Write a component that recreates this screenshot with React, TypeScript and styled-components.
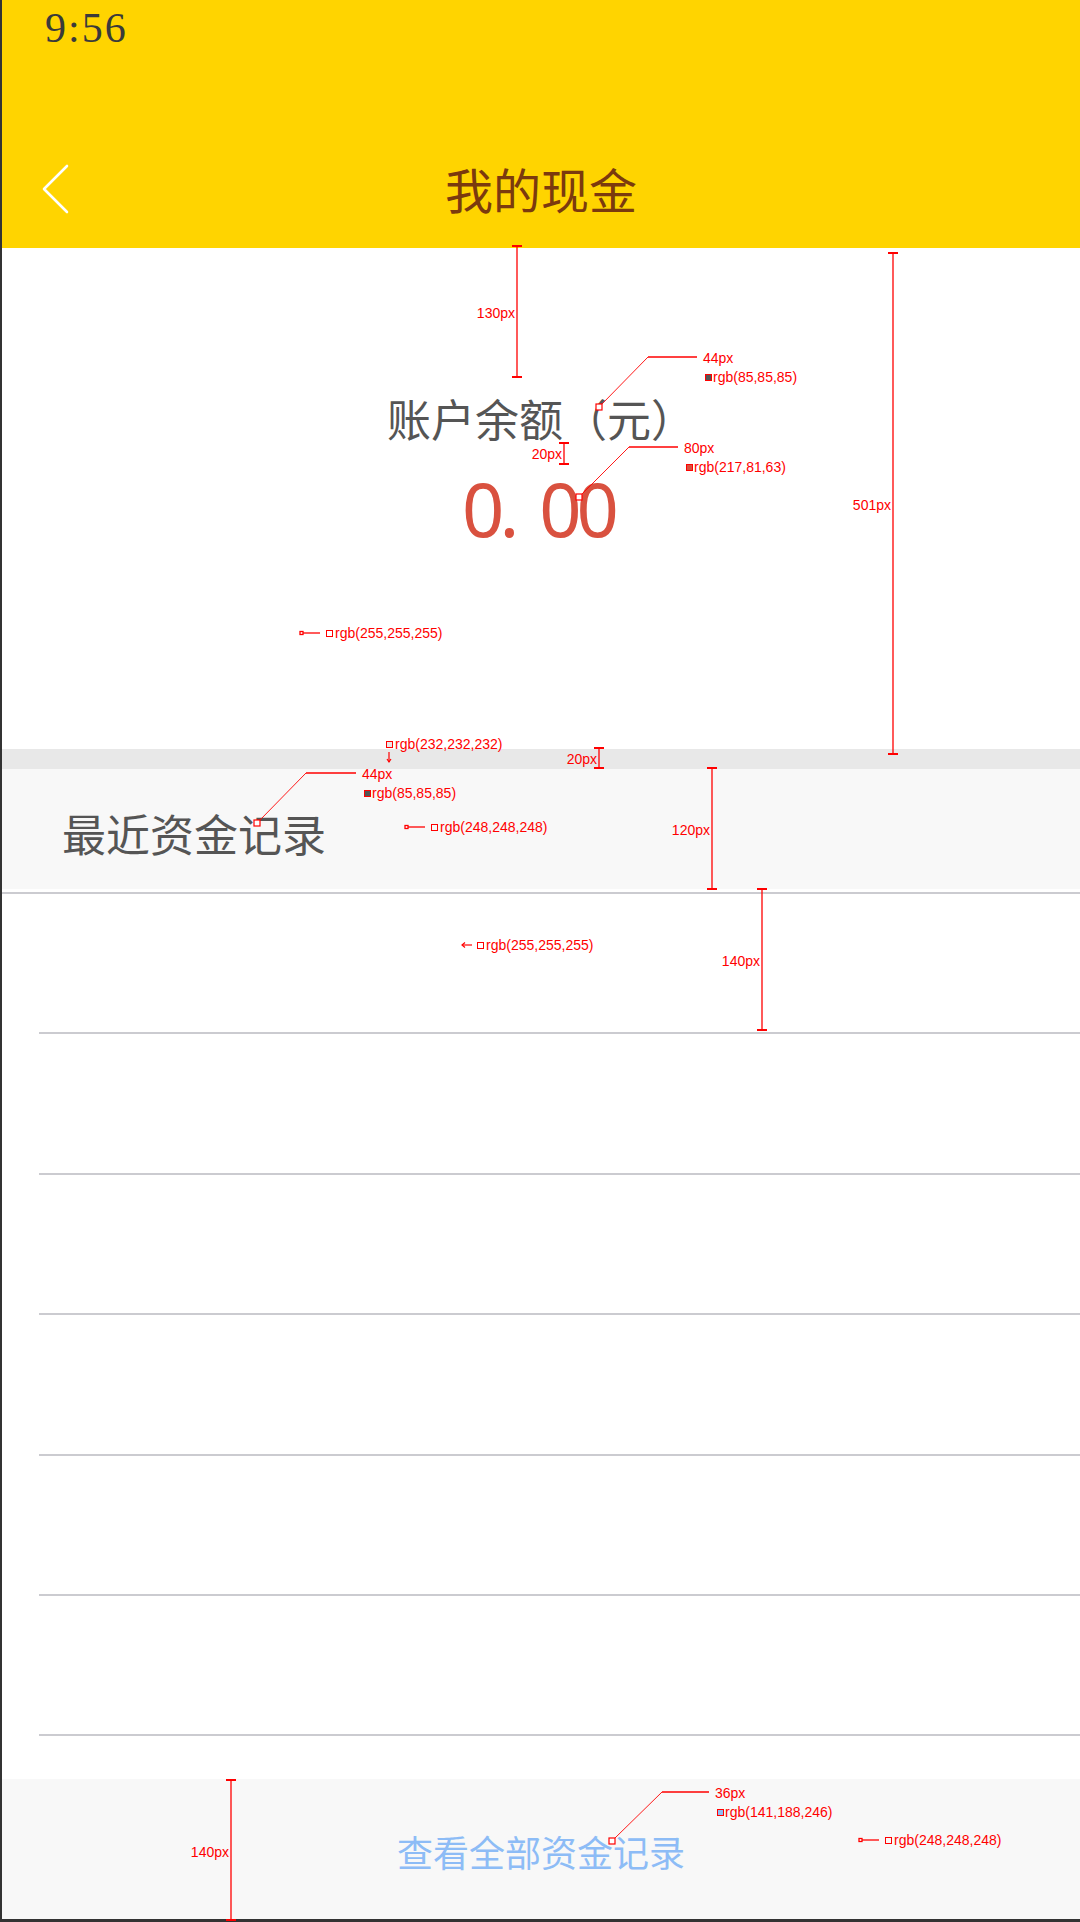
import styled, { createGlobalStyle } from "styled-components";

const GlobalStyle = createGlobalStyle`
  html, body {
    margin: 0;
    padding: 0;
    background: #ffffff;
  }
  body {
    font-family: "Noto Sans CJK SC", "Noto Sans", sans-serif;
  }
`;

const RED = "#ff0000";

// ─── Annotation data (designer mark-up drawn over the page) ─────────
const dims = [
  { x: 517, y1: 246, y2: 377, label: "130px", ly: 313 },
  { x: 564, y1: 443, y2: 464, label: "20px", ly: 454 },
  { x: 893, y1: 253, y2: 754, label: "501px", ly: 505 },
  { x: 599, y1: 748, y2: 768, label: "20px", ly: 759 },
  { x: 712, y1: 768, y2: 889, label: "120px", ly: 830 },
  { x: 762, y1: 889, y2: 1030, label: "140px", ly: 961 },
  { x: 231, y1: 1780, y2: 1920, label: "140px", ly: 1852 },
];

const callouts = [
  { sx: 599, sy: 407, ex: 648, ey: 357, hx: 697, size: "44px", color: "rgb(85,85,85)" },
  { sx: 579, sy: 497, ex: 629, ey: 447, hx: 678, size: "80px", color: "rgb(217,81,63)" },
  { sx: 257, sy: 823, ex: 306, ey: 773, hx: 356, size: "44px", color: "rgb(85,85,85)" },
  { sx: 612, sy: 1841, ex: 662, ey: 1792, hx: 709, size: "36px", color: "rgb(141,188,246)" },
];

const picks = [
  { x: 300, y: 633, color: "rgb(255,255,255)", arrow: false },
  { x: 405, y: 827, color: "rgb(248,248,248)", arrow: false },
  { x: 859, y: 1840, color: "rgb(248,248,248)", arrow: false },
  { x: 462, y: 945, color: "rgb(255,255,255)", arrow: true },
];

const rows = [0, 1, 2, 3, 4, 5];

const App = () => {
  return (
    <Page>
      <GlobalStyle />
      <Header>
        <StatusBar>9:56</StatusBar>
        <NavBar>
          <BackBtn aria-label="back">
            <svg width="30" height="50" viewBox="0 0 30 50">
              <polyline
                points="26,2 3,25 26,48"
                fill="none"
                stroke="#ffffff"
                strokeWidth="2.6"
                strokeLinecap="round"
                strokeLinejoin="round"
              />
            </svg>
          </BackBtn>
          <NavTitle>我的现金</NavTitle>
          <span />
        </NavBar>
      </Header>

      <BalanceCard>
        <BalanceLabel>账户余额（元）</BalanceLabel>
        <Amount>
          0<Dot>.</Dot>00
        </Amount>
      </BalanceCard>

      <Gap />

      <SectionHead>
        <SectionTitle>最近资金记录</SectionTitle>
      </SectionHead>

      <List>
        {rows.map((r) => (
          <Row key={r} />
        ))}
      </List>

      <Footer>
        <FooterLink>查看全部资金记录</FooterLink>
      </Footer>

      <Overlay>
        <AnnSvg width="1080" height="1922" viewBox="0 0 1080 1922">
          {dims.map((d, i) => (
            <g key={`d${i}`} stroke={RED} strokeWidth="1.3">
              <line x1={d.x} y1={d.y1} x2={d.x} y2={d.y2} />
              <line x1={d.x - 5} y1={d.y1} x2={d.x + 5} y2={d.y1} strokeWidth="2" />
              <line x1={d.x - 5} y1={d.y2} x2={d.x + 5} y2={d.y2} strokeWidth="2" />
            </g>
          ))}
          {callouts.map((c, i) => (
            <g key={`c${i}`} stroke={RED} fill="none">
              <rect x={c.sx - 3} y={c.sy - 3} width="6" height="6" fill="#fff" strokeWidth="1.2" />
              <line x1={c.sx + 3} y1={c.sy - 3} x2={c.ex} y2={c.ey} strokeWidth="0.9" />
              <line x1={c.ex} y1={c.ey} x2={c.hx} y2={c.ey} strokeWidth="1.4" />
            </g>
          ))}
          {picks.map((p, i) =>
            p.arrow ? (
              <g key={`p${i}`} stroke={RED} fill="none" strokeWidth="1.2">
                <line x1={p.x} y1={p.y} x2={p.x + 10} y2={p.y} />
                <polyline points={`${p.x + 3},${p.y - 2.5} ${p.x},${p.y} ${p.x + 3},${p.y + 2.5}`} />
              </g>
            ) : (
              <g key={`p${i}`} stroke={RED} fill="none" strokeWidth="1.3">
                <rect x={p.x} y={p.y - 1.5} width="3" height="3" fill="#fff" />
                <line x1={p.x + 3} y1={p.y} x2={p.x + 20} y2={p.y} />
              </g>
            )
          )}
          <g stroke={RED} strokeWidth="1.2" fill="none">
            <line x1="389" y1="752" x2="389" y2="762" />
            <polyline points="387,759 389,762 391,759" />
          </g>
        </AnnSvg>

        {dims.map((d, i) => (
          <AnnText key={`dt${i}`} $x={d.x - 2} $y={d.ly} $right>
            {d.label}
          </AnnText>
        ))}
        {callouts.map((c, i) => (
          <span key={`ct${i}`}>
            <AnnText $x={c.hx + 6} $y={c.ey + 1}>
              {c.size}
            </AnnText>
            <Swatch $x={c.hx + 8} $y={c.ey + 20} $fill={c.color} />
            <AnnText $x={c.hx + 16} $y={c.ey + 20}>
              {c.color}
            </AnnText>
          </span>
        ))}
        {picks.map((p, i) => {
          const off = p.arrow ? 15 : 26;
          return (
            <span key={`pt${i}`}>
              <Swatch $x={p.x + off} $y={p.y} $fill={p.color} />
              <AnnText $x={p.x + off + 9} $y={p.y}>
                {p.color}
              </AnnText>
            </span>
          );
        })}
        <Swatch $x={386} $y={744} $fill="rgb(232,232,232)" />
        <AnnText $x={395} $y={744}>
          rgb(232,232,232)
        </AnnText>
      </Overlay>
    </Page>
  );
};

export default App;

// ─── Styled Components ───────────────────────────────────────
const Page = styled.div`
  position: relative;
  width: 1080px;
  height: 1922px;
  box-sizing: border-box;
  border-left: 2px solid #333333;
  display: flex;
  flex-direction: column;
  background: #ffffff;
  overflow: hidden;
`;

const Header = styled.header`
  height: 248px;
  background: #ffd400;
  display: flex;
  flex-direction: column;
`;

const StatusBar = styled.div`
  height: 128px;
  box-sizing: border-box;
  padding: 7px 0 0 43px;
  font-family: "Liberation Serif", "DejaVu Serif", serif;
  font-size: 42px;
  line-height: 42px;
  letter-spacing: 2px;
  color: #3a3a3a;
`;

const NavBar = styled.div`
  height: 120px;
  display: grid;
  grid-template-columns: 1fr auto 1fr;
  align-items: center;
`;

const BackBtn = styled.button`
  justify-self: start;
  display: flex;
  align-items: center;
  margin-left: 39px;
  margin-top: 1px;
  padding: 0;
  border: none;
  background: none;
  cursor: pointer;
`;

const NavTitle = styled.h1`
  margin: 0;
  font-size: 48px;
  line-height: 48px;
  font-weight: 400;
  color: #7b3a0e;
  font-family: "Noto Sans CJK SC", "Noto Sans", sans-serif;
`;

const BalanceCard = styled.section`
  height: 501px;
  box-sizing: border-box;
  padding-top: 148px;
  background: #ffffff;
  display: flex;
  flex-direction: column;
  align-items: center;
`;

const BalanceLabel = styled.div`
  font-size: 44px;
  line-height: 44px;
  color: rgb(85, 85, 85);
`;

const Amount = styled.div`
  margin-top: 32px;
  margin-left: -6px;
  font-family: "Noto Sans", "Open Sans", sans-serif;
  font-size: 74px;
  line-height: 74px;
  letter-spacing: -5px;
  color: rgb(217, 81, 63);
`;

const Dot = styled.span`
  margin-right: 25px;
`;

const Gap = styled.div`
  height: 20px;
  background: rgb(232, 232, 232);
`;

const SectionHead = styled.div`
  height: 120px;
  box-sizing: border-box;
  padding: 8px 0 0 60px;
  display: flex;
  align-items: center;
  background: rgb(248, 248, 248);
`;

const SectionTitle = styled.h2`
  margin: 0;
  font-size: 44px;
  line-height: 44px;
  font-weight: 400;
  color: rgb(85, 85, 85);
`;

const List = styled.div`
  margin-top: 3px;
  border-top: 2px solid #cbcbd0;
  display: flex;
  flex-direction: column;
`;

const Row = styled.div`
  height: 140.4px;
  box-sizing: border-box;
  margin-left: 37px;
  border-bottom: 2px solid #cbcbd0;
  background: #ffffff;
`;

const Footer = styled.footer`
  margin-top: auto;
  height: 143px;
  box-sizing: border-box;
  padding-top: 4px;
  border-bottom: 3px solid #333333;
  background: rgb(248, 248, 248);
  display: flex;
  align-items: center;
  justify-content: center;
`;

const FooterLink = styled.a`
  font-size: 36px;
  line-height: 36px;
  color: rgb(141, 188, 246);
  cursor: pointer;
`;

const Overlay = styled.div`
  position: absolute;
  left: -2px;
  top: 0;
  width: 1080px;
  height: 1922px;
  pointer-events: none;
`;

const AnnSvg = styled.svg`
  position: absolute;
  left: 0;
  top: 0;
`;

const AnnText = styled.span.attrs<{ $x: number; $y: number; $right?: boolean }>((p) => ({
  style: { left: p.$x, top: p.$y },
}))<{ $x: number; $y: number; $right?: boolean }>`
  position: absolute;
  font-family: "Liberation Sans", Arial, sans-serif;
  font-size: 14px;
  line-height: 14px;
  color: ${RED};
  white-space: nowrap;
  transform: ${({ $right }) => ($right ? "translate(-100%, -50%)" : "translateY(-50%)")};
`;

const Swatch = styled.span.attrs<{ $x: number; $y: number; $fill: string }>((p) => ({
  style: { left: p.$x, top: p.$y - 3.5 },
}))<{ $x: number; $y: number; $fill: string }>`
  position: absolute;
  width: 5px;
  height: 5px;
  border: 1px solid ${RED};
  background: ${({ $fill }) => $fill};
`;
